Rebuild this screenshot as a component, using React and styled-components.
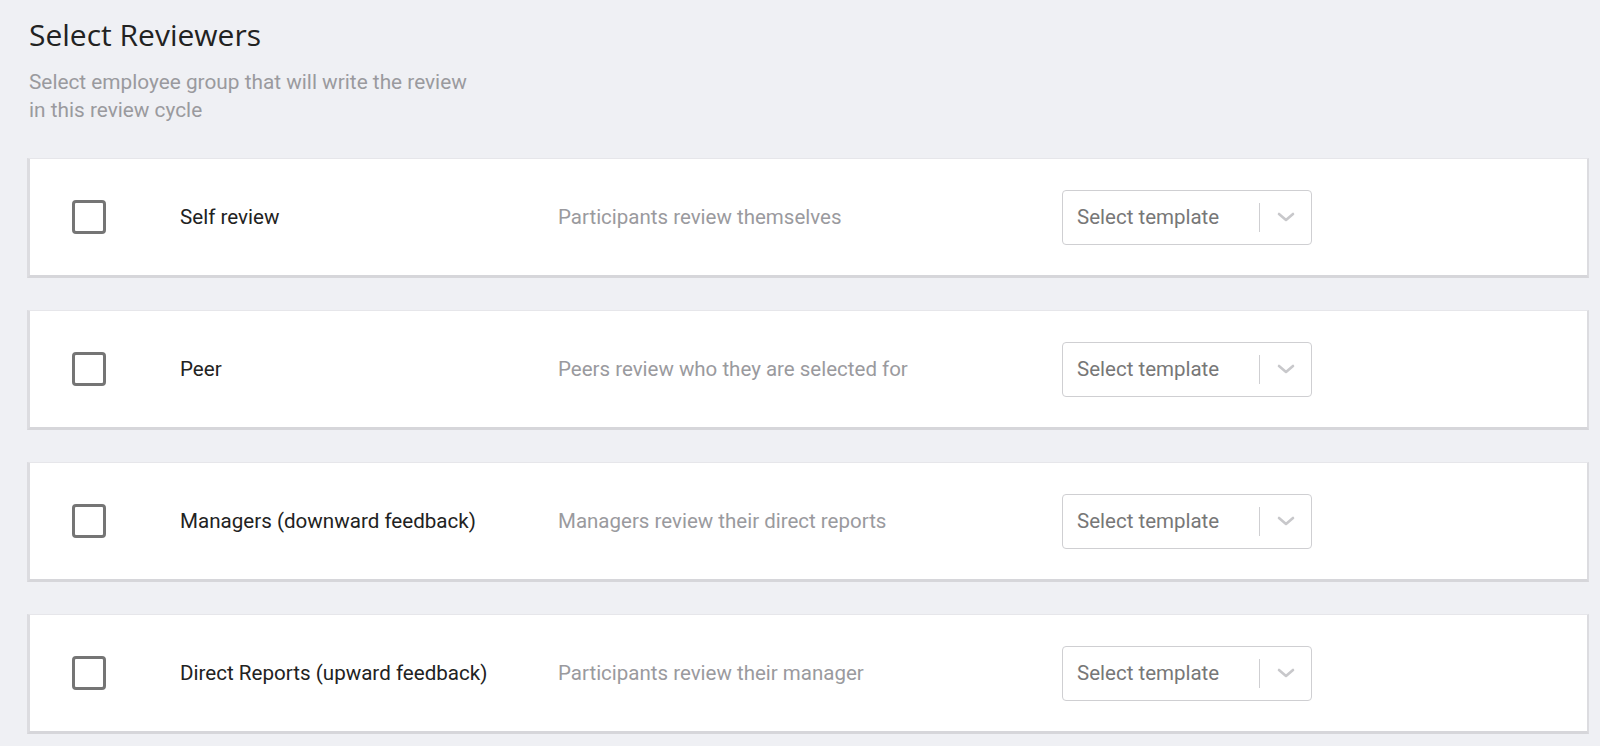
import React from 'react';
import styled, { createGlobalStyle } from 'styled-components';

const GlobalStyle = createGlobalStyle`
  html, body {
    margin: 0;
    padding: 0;
    background: #eff0f4;
  }
  body {
    font-family: Roboto, "Liberation Sans", sans-serif;
    -webkit-font-smoothing: antialiased;
  }
`;

const Page = styled.div`
  padding: 14px 11px 0 27px;
  min-height: 746px;
  box-sizing: border-box;
`;

const Header = styled.div`
  padding-left: 2px;
  margin-bottom: 34px;
`;

const Title = styled.h1`
  margin: 0;
  font-family: "Open Sans", "Noto Sans", sans-serif;
  font-size: 30px;
  font-weight: 400;
  line-height: 42px;
  color: #222;
`;

const Subtitle = styled.p`
  margin: 12px 0 0;
  font-size: 20.8px;
  line-height: 28px;
  color: #9a9a9e;
  max-width: 445px;
`;

const List = styled.div`
  display: flex;
  flex-direction: column;
  gap: 32px;
`;

const Card = styled.div`
  display: grid;
  grid-template-columns: 34px 452px 504px 250px;
  align-items: center;
  height: 116px;
  background: #fff;
  border-top: 1px solid #e6e6ea;
  border-left: 3px solid #dcdce0;
  border-right: 2px solid #dcdce0;
  border-bottom: 3px solid #d6d6da;
  padding-left: 42px;
`;

const Checkbox = styled.span`
  display: block;
  width: 34px;
  height: 34px;
  box-sizing: border-box;
  border: 3px solid #757575;
  border-radius: 4px;
`;

const Label = styled.div`
  padding-left: 74px;
  font-size: 20.6px;
  color: #222;
`;

const Description = styled.div`
  font-size: 20.5px;
  color: #9a9a9e;
`;

const Select = styled.div`
  display: flex;
  align-items: center;
  height: 55px;
  box-sizing: border-box;
  border: 1px solid #cfcfd2;
  border-radius: 4px;
  background: #fff;
`;

const Placeholder = styled.span`
  flex: 1;
  padding-left: 14px;
  font-size: 20.5px;
  color: #777;
`;

const Divider = styled.span`
  width: 1px;
  height: 29px;
  background: #cfcfd2;
`;

const Chevron = styled.span`
  display: flex;
  align-items: center;
  justify-content: center;
  width: 51px;
`;

const rows = [
  { label: 'Self review', desc: 'Participants review themselves' },
  { label: 'Peer', desc: 'Peers review who they are selected for' },
  { label: 'Managers (downward feedback)', desc: 'Managers review their direct reports' },
  { label: 'Direct Reports (upward feedback)', desc: 'Participants review their manager' },
];

const App = () => {
  return (
    <>
      <GlobalStyle />
      <Page>
        <Header>
          <Title>Select Reviewers</Title>
          <Subtitle>Select employee group that will write the review in this review cycle</Subtitle>
        </Header>
        <List>
          {rows.map((r) => (
            <Card key={r.label}>
              <Checkbox />
              <Label>{r.label}</Label>
              <Description>{r.desc}</Description>
              <Select>
                <Placeholder>Select template</Placeholder>
                <Divider />
                <Chevron>
                  <svg width="18" height="10" viewBox="0 0 18 10">
                    <path d="M2 2 L9 8 L16 2" fill="none" stroke="#c8c8cb" strokeWidth="2.6" strokeLinecap="round" strokeLinejoin="round" />
                  </svg>
                </Chevron>
              </Select>
            </Card>
          ))}
        </List>
      </Page>
    </>
  );
};

export default App;
